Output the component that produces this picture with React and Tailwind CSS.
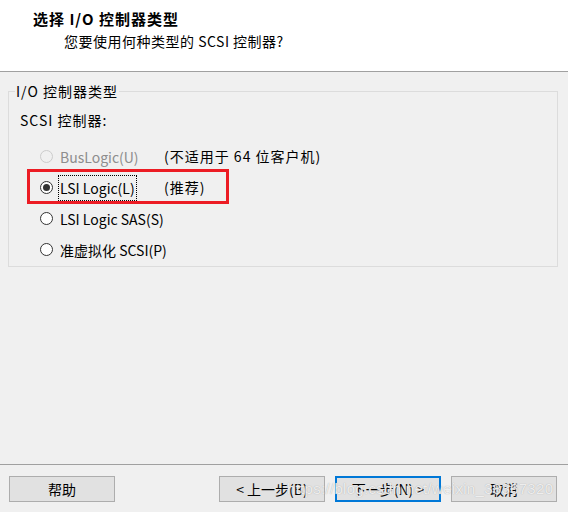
import React from 'react';

const font = { fontFamily: '"Noto Sans CJK SC", "Noto Sans", sans-serif' };

const Radio = ({ checked, disabled }) => (
  <span
    className={`w-[13px] h-[13px] rounded-full border flex items-center justify-center shrink-0 ${
      disabled ? 'border-[#cccccc] bg-[#f0f0f0]' : 'border-[#333333] bg-white'
    }`}
  >
    {checked && <span className="w-[7px] h-[7px] rounded-full bg-[#333333]" />}
  </span>
);

const Option = ({ label, note, checked, disabled, focused }) => (
  <div className="h-[31px] flex items-center">
    <div className="w-[31px]" />
    <Radio checked={checked} disabled={disabled} />
    <div className="w-[111px] pl-[6px] flex items-center">
      <span
        className={`px-[1px] leading-[24px] whitespace-nowrap ${disabled ? 'text-[#8d8d8d]' : 'text-black'} ${
          focused ? 'outline outline-1 outline-dotted outline-black' : ''
        }`}
      >
        {label}
      </span>
    </div>
    {note && <span className="text-black tracking-[1px] whitespace-nowrap">{note}</span>}
  </div>
);

const Button = ({ children, primary }) => (
  <button
    className={`w-[106px] h-[26px] bg-[#e1e1e1] text-[14px] text-black flex items-center justify-center ${
      primary ? 'border-2 border-[#0078d7]' : 'border border-[#adadad]'
    }`}
  >
    {children}
  </button>
);

export default function App() {
  return (
    <div className="w-[568px] h-[512px] flex flex-col bg-[#f0f0f0] text-[14px] relative overflow-hidden" style={font}>
      {/* Header */}
      <div className="h-[72px] bg-white border-b border-[#a0a0a0] pl-[33px] pt-[8px]">
        <div className="font-bold text-[15px] leading-[22px] tracking-[1px] text-black">选择 I/O 控制器类型</div>
        <div className="pl-[31px] text-[14px] leading-[22px] tracking-[0.5px] text-black">您要使用何种类型的 SCSI 控制器?</div>
      </div>

      {/* Body */}
      <div className="flex-1 pt-[11px] px-[8px]">
        <fieldset className="w-[550px] h-[184px] border border-[#dcdcdc] relative">
          <legend className="ml-[6px] px-[1px] leading-[16px] tracking-[1px] text-black">I/O 控制器类型</legend>
          <div className="pl-[11px] pt-[11px] leading-[20px] tracking-[1px] text-black">SCSI 控制器:</div>
          <div className="pt-[11px]">
            <Option label="BusLogic(U)" note="(不适用于 64 位客户机)" disabled />
            <Option label="LSI Logic(L)" note="(推荐)" checked focused />
            <Option label="LSI Logic SAS(S)" />
            <Option label="准虚拟化 SCSI(P)" />
          </div>
          {/* highlight box */}
          <div className="absolute left-[18px] top-[70px] w-[202px] h-[35px] border-[3px] border-[#ec1c24]" />
        </fieldset>
      </div>

      {/* Footer */}
      <div className="h-[48px] border-t border-[#a0a0a0] flex items-start pt-[11px] pl-[9px]">
        <Button>帮助</Button>
        <div className="flex gap-[10px] ml-[104px]">
          <Button>&lt; 上一步(B)</Button>
          <Button primary>下一步(N) &gt;</Button>
          <Button>取消</Button>
        </div>
      </div>

      {/* watermark */}
      <div
        className="absolute left-[287px] top-[478px] text-[15px] text-white/80 pointer-events-none tracking-[0.3px]"
        style={{ fontFamily: '"Liberation Sans", sans-serif', textShadow: '0 0 1px #9a9a9a' }}
      >
        https://blog.csdn.net/weixin_38367320
      </div>
    </div>
  );
}
